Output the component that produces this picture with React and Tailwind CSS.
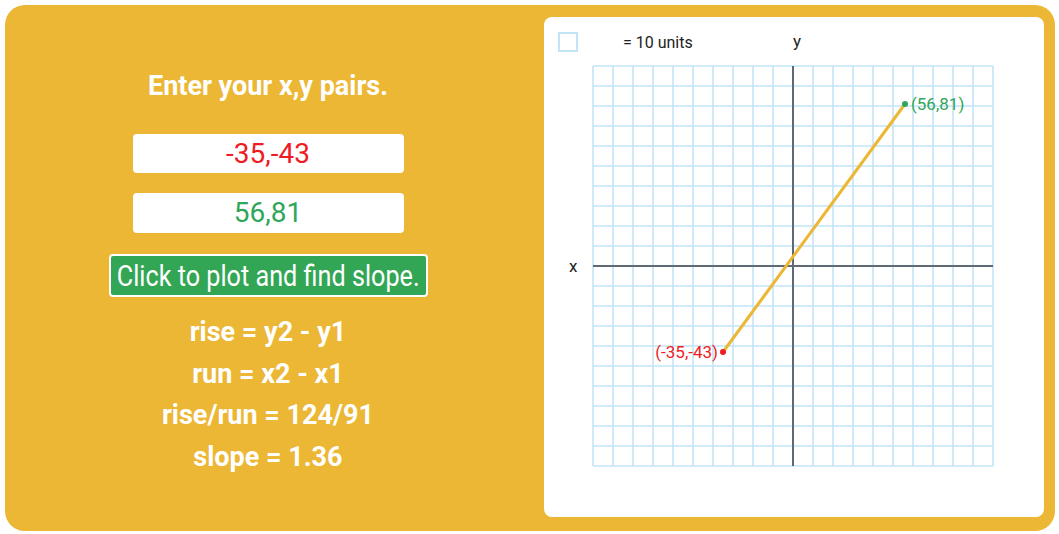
import React from 'react';

const FONT = { fontFamily: '"Liberation Sans Narrow", Roboto, "Liberation Sans", sans-serif' };

// grid of 20x20 cells, 20px each, origin at centre
const CELLS = Array.from({ length: 21 }, (_, i) => i * 20);

const toX = (x) => 249 + x * 2;
const toY = (y) => 249 - y * 2;

const Graph = () => {
    const p1 = { x: -35, y: -43 };
    const p2 = { x: 56, y: 81 };
    return (
        <svg width="500" height="500" viewBox="0 0 500 500" className="block" style={FONT}>
            <rect x="15" y="16" width="18" height="18" fill="none" stroke="#c3e4f7" strokeWidth="2" />
            <text x="79" y="31" fontSize="16" fill="#222">= 10 units</text>
            <text x="249" y="30" fontSize="17" fill="#222">y</text>
            <text x="25" y="255" fontSize="17" fill="#222">x</text>
            <g stroke="#c3e4f7" strokeWidth="1.6">
                {CELLS.map(c => (
                    <line key={'v' + c} x1={49 + c} y1="49" x2={49 + c} y2="449" />
                ))}
                {CELLS.map(c => (
                    <line key={'h' + c} x1="49" y1={49 + c} x2="449" y2={49 + c} />
                ))}
            </g>
            <line x1="249" y1="49" x2="249" y2="449" stroke="#5d6a75" strokeWidth="2" />
            <line x1="49" y1="249" x2="449" y2="249" stroke="#5d6a75" strokeWidth="2" />
            <line x1={toX(p1.x)} y1={toY(p1.y)} x2={toX(p2.x)} y2={toY(p2.y)} stroke="#ebb734" strokeWidth="3" />
            <circle cx={toX(p1.x)} cy={toY(p1.y)} r="3" fill="#ee1c25" />
            <circle cx={toX(p2.x)} cy={toY(p2.y)} r="3" fill="#2fa65a" />
            <text x={toX(p1.x) - 5} y={toY(p1.y) + 6} fontSize="17" fill="#ee1c25" textAnchor="end">(-35,-43)</text>
            <text x={toX(p2.x) + 6} y={toY(p2.y) + 6} fontSize="17" fill="#2fa65a">(56,81)</text>
        </svg>
    );
};

const App = () => {
    return (
        <div className="w-[1059px] h-[534px] bg-white p-[5px]" style={FONT}>
            <div className="w-[1050px] h-[526px] rounded-[20px] bg-[#ebb734] flex">
                <div className="w-[526px] flex flex-col items-center pt-[61px] text-white">
                    <h1 className="text-[27px] font-bold leading-[40px]">Enter your x,y pairs.</h1>
                    <div className="mt-[28px] w-[271px] h-[39px] bg-white rounded-[4px] flex items-center justify-center text-[28px] text-[#ee1c25]">-35,-43</div>
                    <div className="mt-[20px] w-[271px] h-[40px] bg-white rounded-[4px] flex items-center justify-center text-[28px] text-[#2fa65a]">56,81</div>
                    <button className="mt-[21px] w-[319px] h-[43px] bg-[#33a655] border-2 border-white rounded-[4px] text-[30px] text-white flex items-center justify-center">
                        <span className="inline-block whitespace-nowrap scale-x-[0.84]">Click to plot and find slope.</span>
                    </button>
                    <div className="mt-[15px] flex flex-col items-center text-[27px] font-bold leading-[41.5px]">
                        <div>rise = y2 - y1</div>
                        <div>run = x2 - x1</div>
                        <div>rise/run = 124/91</div>
                        <div>slope = 1.36</div>
                    </div>
                </div>
                <div className="ml-[13px] mt-[12px] w-[500px] h-[500px] bg-white rounded-[8px] overflow-hidden">
                    <Graph />
                </div>
            </div>
        </div>
    );
};

export default App;
